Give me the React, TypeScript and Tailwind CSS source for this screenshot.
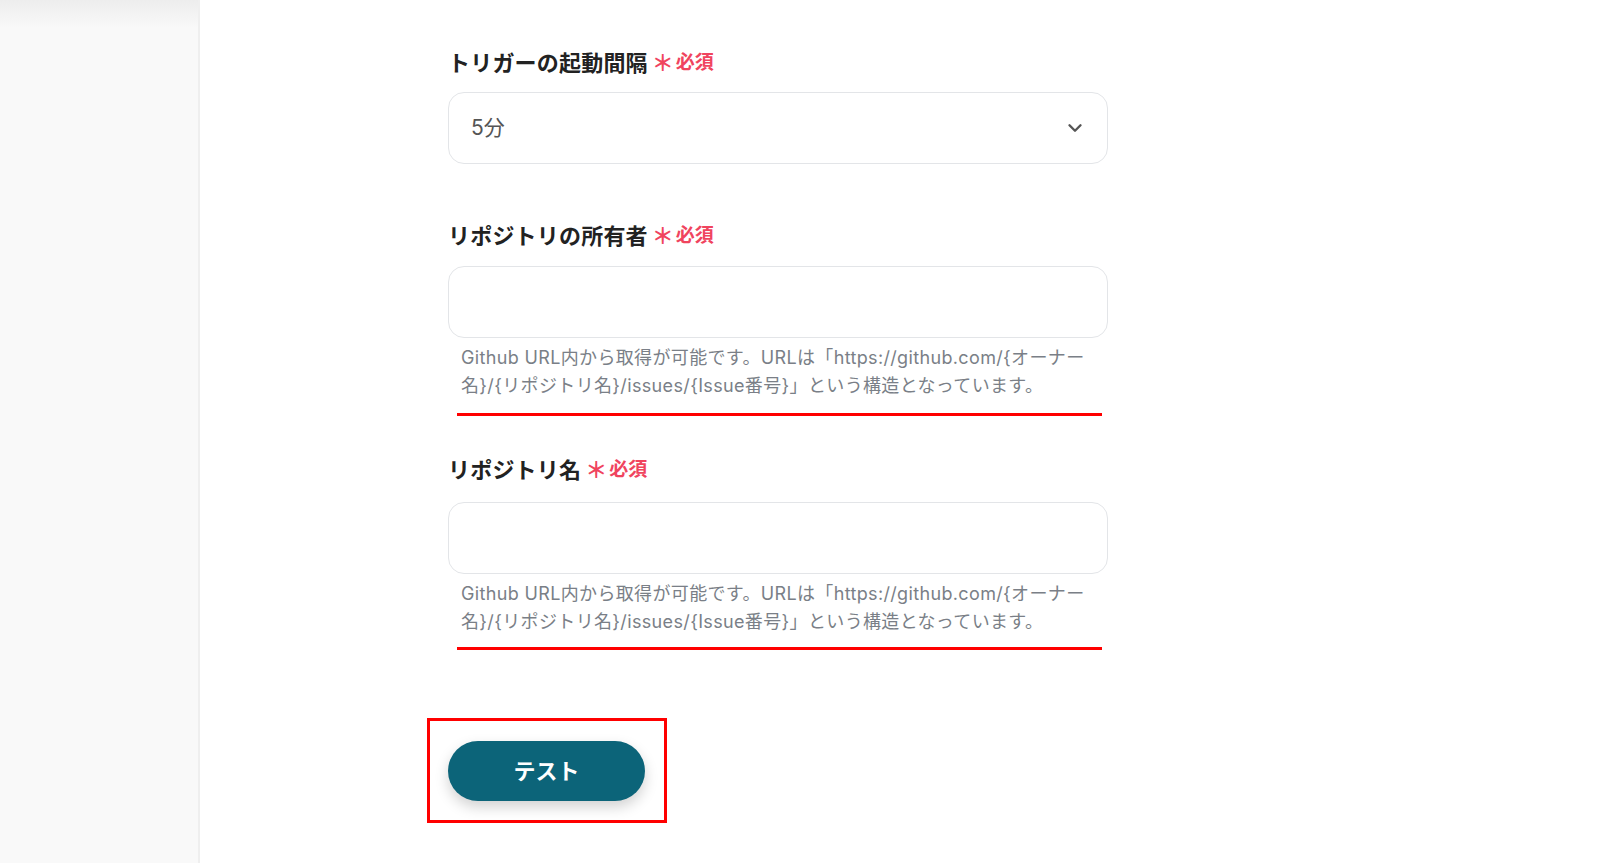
import React from "react";
import { ChevronDown } from "lucide-react";

const font = { fontFamily: "Inter, 'Noto Sans CJK JP', 'Noto Sans', sans-serif" };

function Label({ text, className = "" }: { text: string; className?: string }) {
  return (
    <div className={`flex items-center h-[30px] ${className}`}>
      <span className="text-[22px] font-bold text-[#222] tracking-[0.2px] leading-[30px]">{text}</span>
      <span className="ml-[4px] text-[22px] font-bold text-[#f0445e] leading-[30px]">＊</span>
      <span className="ml-[2px] text-[19px] font-semibold text-[#f0445e] leading-[30px]">必須</span>
    </div>
  );
}

function Help() {
  return (
    <div className="pl-[13px] text-[18px] leading-[28px] text-[#7a7f87] tracking-[0.35px]">
      <div>Github URL内から取得が可能です。URLは「https://github.com/&#123;オーナー</div>
      <div>名&#125;/&#123;リポジトリ名&#125;/issues/&#123;Issue番号&#125;」という構造となっています。</div>
    </div>
  );
}

export default function App() {
  return (
    <div className="flex w-[1600px] h-[863px] overflow-hidden bg-white" style={font}>
      <div className="relative w-[200px] shrink-0 h-full bg-[#f9f9f9] border-r-[2px] border-[#efefef]">
        <div className="h-[28px] bg-gradient-to-b from-[#ededed] to-[#f9f9f9]" />
      </div>
      <div className="pl-[248px] pt-[48px]">
        <div className="w-[660px]">
          <Label text="トリガーの起動間隔" />
          <div className="mt-[14px] h-[72px] rounded-[16px] border border-[#e3e5e8] flex items-center justify-between pl-[22px] pr-[21px]">
            <span className="text-[21px] text-[#555]">5分</span>
            <ChevronDown size={22} strokeWidth={2.6} className="text-[#555]" />
          </div>

          <Label text="リポジトリの所有者" className="mt-[57px]" />
          <div className="mt-[15px] h-[72px] rounded-[16px] border border-[#e3e5e8]" />
          <div className="mt-[6px]">
            <Help />
          </div>
          <div className="mt-[13px] ml-[9px] w-[645px] h-[3px] bg-[#ff0000]" />

          <Label text="リポジトリ名" className="mt-[39px]" />
          <div className="mt-[17px] h-[72px] rounded-[16px] border border-[#e3e5e8]" />
          <div className="mt-[6px]">
            <Help />
          </div>
          <div className="mt-[11px] ml-[9px] w-[645px] h-[3px] bg-[#ff0000]" />

          <div className="mt-[68px] -ml-[21px] w-[240px] h-[105px] border-[3px] border-[#ff0000] pl-[18px] pt-[20px]">
            <button className="w-[197px] h-[60px] rounded-full bg-[#0c6479] text-white text-[22px] font-semibold shadow-[0_6px_14px_rgba(0,0,0,0.18)]">
              テスト
            </button>
          </div>
        </div>
      </div>
    </div>
  );
}
